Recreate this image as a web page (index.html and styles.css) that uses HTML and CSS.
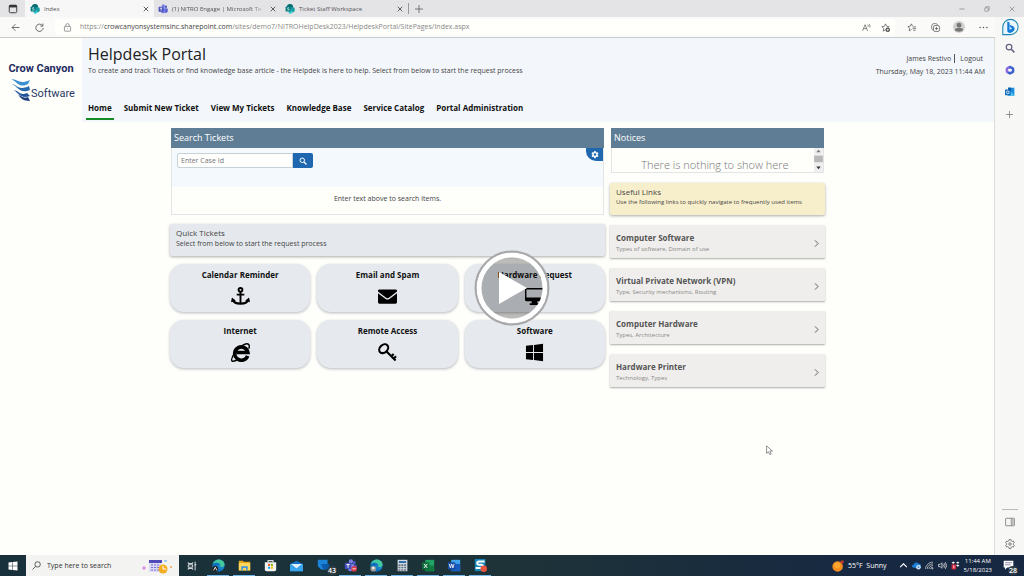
FILE: index.html
```html
<!DOCTYPE html>
<html lang="en">
<head>
<meta charset="utf-8">
<title>Helpdesk Portal</title>
<link rel="stylesheet" href="styles.css">
</head>
<body>
<svg class="defs" aria-hidden="true">
  <symbol id="sharepoint" viewBox="0 0 16 16"><circle cx="8" cy="5" r="5" fill="#036c70"/><circle cx="11.500" cy="9" r="4.200" fill="#1a9ba1"/><circle cx="8.500" cy="12.500" r="3.200" fill="#37c6d0"/><rect x="1" y="4" width="8" height="8" rx="1" fill="#03787c"/><path d="M6.700 6.200c-1-.7-2.800-.5-2.800.5 0 1.300 2.700.8 2.700 2.200 0 1.200-2 1.300-3 .6" fill="none" stroke="#fff" stroke-width="1.100"/></symbol>
  <symbol id="teams" viewBox="0 0 16 16"><circle cx="12.500" cy="4.500" r="2" fill="#5059c9"/><circle cx="8.500" cy="3" r="2.600" fill="#7b83eb"/><path d="M10 7h5.500v4a3 3 0 0 1-3 3H10z" fill="#5059c9"/><path d="M5 6h7v5.500a4 4 0 0 1-7 2z" fill="#7b83eb"/><rect x="1" y="4.500" width="8" height="8" rx="1" fill="#464eb8"/><path d="M3 6.700h4M5 6.700v4" stroke="#fff" stroke-width="1.200"/></symbol>
  <symbol id="close" viewBox="0 0 16 16"><path d="M2 2l12 12M14 2L2 14" stroke="currentColor" stroke-width="2" fill="none"/></symbol>
  <symbol id="plus" viewBox="0 0 16 16"><path d="M8 0v16M0 8h16" stroke="currentColor" stroke-width="1.500" fill="none"/></symbol>
  <symbol id="search" viewBox="0 0 16 16"><circle cx="6.500" cy="6.500" r="4.500" fill="none" stroke="currentColor" stroke-width="2"/><path d="M10 10l5 5" stroke="currentColor" stroke-width="2.500"/></symbol>
  <symbol id="gear" viewBox="0 0 16 16"><path fill="currentColor" fill-rule="evenodd" d="M6.500 0h3l.4 2.200 1.500.9 2.100-.8 1.500 2.600-1.700 1.400v1.800l1.700 1.400-1.500 2.600-2.100-.8-1.500.9-.4 2.300h-3l-.4-2.300-1.500-.9-2.100.8L1 9.500l1.700-1.400V6.300L1 4.900l1.500-2.600 2.100.8 1.500-.9zM8 4.700a2.500 2.500 0 1 0 0 5 2.500 2.500 0 0 0 0-5z"/></symbol>
  <symbol id="chevron" viewBox="0 0 8 12"><path d="M1.500 1l5 5-5 5" fill="none" stroke="currentColor" stroke-width="1.500"/></symbol>
  <symbol id="edge" viewBox="0 0 16 16"><circle cx="8" cy="8" r="7.500" fill="#1683c4"/><path d="M1 7C2 2 6 .3 9 .5c4 .3 6.800 3.500 6.500 6.500-.3 2.500-3 3.500-5.500 2.500 1-1.500 0-4.500-3-4.500S2 5.500 1 7z" fill="#43c9a0"/><path d="M1 7c2-3 7-3 8 0-3-1-4 3-1 5 2 1.500 4.500 1 6 .5C10 17 2 16 1 10z" fill="#0d6cbd"/></symbol>
</svg>

<header class="tabbar">
  <button class="tab-menu" aria-label="Tab actions"><svg viewBox="0 0 16 16"><rect x="2" y="2" width="12" height="12" rx="2" fill="none" stroke="#333" stroke-width="1.500"/><path d="M2 3.500h12" stroke="#333" stroke-width="4"/></svg></button>
  <div class="tab tab-active"><svg class="tab-icon"><use href="#sharepoint"/></svg><span class="tab-title">Index</span><button class="tab-close" aria-label="Close Index"><svg><use href="#close"/></svg></button></div>
  <div class="tab"><svg class="tab-icon"><use href="#teams"/></svg><span class="tab-title tab-fade">(1) NITRO Engage | Microsoft Te</span><button class="tab-close" aria-label="Close Teams"><svg><use href="#close"/></svg></button></div>
  <div class="tab"><svg class="tab-icon"><use href="#sharepoint"/></svg><span class="tab-title">Ticket Staff Workspace</span><button class="tab-close" aria-label="Close Workspace"><svg><use href="#close"/></svg></button></div>
  <button class="new-tab" aria-label="New tab"><svg><use href="#plus"/></svg></button>
  <div class="window-buttons">
    <button aria-label="Minimize"><svg viewBox="0 0 16 16"><path d="M1 8h14" stroke="currentColor" stroke-width="2"/></svg></button>
    <button aria-label="Restore"><svg viewBox="0 0 16 16" fill="none" stroke="currentColor" stroke-width="1.800"><rect x="2" y="5" width="9" height="9" rx="1"/><path d="M5 5V2h9v9h-3"/></svg></button>
    <button aria-label="Close window"><svg><use href="#close"/></svg></button>
  </div>
</header>

<div class="browser">
  <div class="view">
    <div class="toolbar">
      <button class="tool" aria-label="Back"><svg viewBox="0 0 16 16"><path d="M15 8H2M8 2L2 8l6 6" fill="none" stroke="currentColor" stroke-width="1.500"/></svg></button>
      <button class="tool" aria-label="Refresh"><svg viewBox="0 0 16 16"><path d="M13.500 5A6.500 6.500 0 1 0 14.500 8.500M14 1v4.500H9.500" fill="none" stroke="currentColor" stroke-width="1.500"/></svg></button>
      <div class="address">
        <svg class="lock" viewBox="0 0 16 16" fill="none" stroke="#888" stroke-width="1.500"><rect x="2.500" y="6" width="11" height="8.500" rx="1"/><path d="M5 6V4a3 3 0 0 1 6 0v2M8 9.500v1.500"/></svg>
        <a class="url" href="#">https://<b>crowcanyonsystemsinc.sharepoint.com</b>/sites/demo7/NITROHelpDesk2023/HelpdeskPortal/SitePages/Index.aspx</a>
        <button class="tool" aria-label="Read aloud"><svg viewBox="0 0 16 16" fill="none" stroke="currentColor" stroke-width="1.200"><path d="M1 14L5.500 3 10 14M2.600 10h5.800M10 3q1.500 1.500 1 4M12.500 1.500q2.500 2.500 1.500 6.500"/></svg></button>
        <button class="tool" aria-label="Add favorite"><svg viewBox="0 0 16 16" fill="none" stroke="currentColor" stroke-width="1.300"><path d="M8 12l-4 2.500.8-4.800L1.500 6.500 6 5.800 8 1.500l2 4.300 4.500.7-1 1"/><circle cx="12" cy="12" r="3.500" fill="#444"/><path d="M12 10v4M10 12h4" stroke="#fff"/></svg></button>
      </div>
      <button class="tool" aria-label="Favorites"><svg viewBox="0 0 16 16" fill="none" stroke="currentColor" stroke-width="1.300"><path d="M8 11.500l-4 2.500.8-4.500L1.500 6.500 6 5.500l1.800-4 2 4M10 7h6M10 10h6M11 13h4"/></svg></button>
      <button class="tool" aria-label="Collections"><svg viewBox="0 0 16 16" fill="none" stroke="currentColor" stroke-width="1.300"><path d="M4 12.500C1 12 .7 9 1.200 6 1.500 2.500 3 1 6 1c3.500 0 5 .5 5.700 2.500"/><rect x="4.500" y="4.500" width="10.500" height="10.500" rx="2.500"/><path d="M9.700 7v5.500M7 9.700h5.500"/></svg></button>
      <button class="tool avatar" aria-label="Profile"><svg viewBox="0 0 16 16"><circle cx="8" cy="8" r="8" fill="#d3d1ce"/><circle cx="8" cy="5.500" r="3.200" fill="#777"/><path d="M2.500 12c0-4 11-4 11 0-1.500 3-9.500 3-11 0z" fill="#777"/></svg></button>
      <button class="tool" aria-label="More"><svg viewBox="0 0 16 16" fill="currentColor"><circle cx="2" cy="8" r="1.300"/><circle cx="8" cy="8" r="1.300"/><circle cx="14" cy="8" r="1.300"/></svg></button>
    </div>

    <div class="page">
      <header class="site-header">
        <svg class="logo" viewBox="0 0 82 84" role="img" aria-label="Crow Canyon Software">
          <text class="logo-top" x="41" y="34" text-anchor="middle">Crow Canyon</text>
          <text class="logo-bottom" x="31" y="59">Software</text>
          <path d="M11 41c7 0 8 6 19 1l-2 4C19 51 17 43 11 41z" fill="#3c8fd0"/>
          <path d="M12 46c5 1 7 7 17 2l1 4c-10 4-12-3-18-6z" fill="#2869ad"/>
          <path d="M14 52c5 1 6 6 13 3l3 3c-9 3-11-2-16-6z" fill="#23569a"/>
          <path d="M18 57c4 1 5 4 10 2l2 4c-7 0-9-3-12-6z" fill="#1c3f7b"/>
        </svg>
        <div class="site-main">
          <h1 class="site-title">Helpdesk Portal</h1>
          <p class="site-desc">To create and track Tickets or find knowledge base article - the Helpdek is here to help. Select from below to start the request process</p>
          <nav class="site-nav">
            <a class="current" href="#">Home</a><a href="#">Submit New Ticket</a><a href="#">View My Tickets</a><a href="#">Knowledge Base</a><a href="#">Service Catalog</a><a href="#">Portal Administration</a>
          </nav>
        </div>
        <div class="user">
          <div class="user-line"><span class="user-name">James Restivo</span><a href="#">Logout</a></div>
          <div>Thursday, May 18, 2023 11:44 AM</div>
        </div>
      </header>

      <main class="content">
        <div class="col-left">
          <section class="panel">
            <h2 class="panel-title">Search Tickets</h2>
            <div class="search-area">
              <form class="search-form"><input type="text" placeholder="Enter Case Id" aria-label="Case Id"><button type="button" aria-label="Search"><svg><use href="#search"/></svg></button></form>
              <button class="settings" aria-label="Settings"><svg><use href="#gear"/></svg></button>
            </div>
            <p class="search-empty">Enter text above to search items.</p>
          </section>
          <section class="banner quick">
            <h2>Quick Tickets</h2>
            <p>Select from below to start the request process</p>
          </section>
          <div class="tiles">
            <a class="tile" href="#"><span>Calendar Reminder</span><svg viewBox="0 0 20 20"><g fill="none" stroke="#000" stroke-width="2"><circle cx="10" cy="3" r="2"/><path d="M10 5v13M6 8h8"/><path d="M2 13c1 6 15 6 16 0" stroke-width="2.500"/></g><path d="M0 16l1-5 4 3.500zM20 16l-1-5-4 3.500z"/></svg></a>
            <a class="tile" href="#"><span>Email and Spam</span><svg viewBox="0 0 20 20"><path d="M0 4q0-1.500 1.500-1.500h17Q20 2.500 20 4v.8l-8.500 6.500q-1.500 1-3 0L0 4.800z"/><path d="M0 6.500l8 6q2 1.500 4 0l8-6V16q0 1.500-1.500 1.500h-17Q0 17.500 0 16z"/></svg></a>
            <a class="tile" href="#"><span>Hardware Request</span><svg viewBox="0 0 20 20"><path fill-rule="evenodd" d="M1 1h18l1 1v12l-1 1h-6v2h2v2H5v-2h2v-2H1l-1-1V2zm.5 1.500V11h17V2.500z"/></svg></a>
            <a class="tile" href="#"><span>Internet</span><svg viewBox="0 0 20 20"><path d="M17.500 13.500A7 7 0 1 1 17.800 10H6" fill="none" stroke="#000" stroke-width="3.800"/><path d="M12 2.500C17-.5 20.500.5 18.800 6M3.500 11C-2 20 1 21 8 17" fill="none" stroke="#000" stroke-width="1.500"/></svg></a>
            <a class="tile" href="#"><span>Remote Access</span><svg viewBox="0 0 20 20"><g fill="none" stroke="#000" stroke-width="2.200"><ellipse cx="6" cy="6" rx="5.300" ry="4" transform="rotate(-45 6 6)"/><path d="M9 9l9.500 9.500M14 14l2.500-2.500M16.500 16.500l2.500-2.500"/></g></svg></a>
            <a class="tile" href="#"><span>Software</span><svg viewBox="0 0 20 20"><path d="M1 3l7.500-1v7.500H1zM9.500 2L19 .8v8.700H9.500zM1 10.500h7.500V18L1 17zM9.500 10.500H19v8.700L9.500 18z"/></svg></a>
          </div>
        </div>
        <div class="col-right">
          <section class="panel">
            <h2 class="panel-title">Notices</h2>
            <div class="notice-body">
              <p>There is nothing to show here</p>
              <svg class="scroller" viewBox="0 0 8 22" aria-hidden="true"><path fill="#eee" d="M0 0h8v22H0z"/><path fill="#b8b8b8" d="M0 7h8v6H0z"/><path fill="#777" d="M4 1.500L6 4H2z"/><path fill="#333" d="M4 19.500L6 17H2z"/></svg>
            </div>
          </section>
          <section class="banner useful">
            <h2>Useful Links</h2>
            <p>Use the following links to quickly navigate to frequently used items</p>
          </section>
          <a class="link-card" href="#"><span><strong>Computer Software</strong><small>Types of software, Domain of use</small></span><svg><use href="#chevron"/></svg></a>
          <a class="link-card" href="#"><span><strong>Virtual Private Network (VPN)</strong><small>Type, Security mechanisms, Routing</small></span><svg><use href="#chevron"/></svg></a>
          <a class="link-card" href="#"><span><strong>Computer Hardware</strong><small>Types, Architecture</small></span><svg><use href="#chevron"/></svg></a>
          <a class="link-card" href="#"><span><strong>Hardware Printer</strong><small>Technology, Types</small></span><svg><use href="#chevron"/></svg></a>
        </div>
      </main>
    </div>
  </div>

  <aside class="sidebar">
    <button class="bing" aria-label="Bing"><svg viewBox="0 0 20 20"><path d="M2 18.500V10a8.500 8.500 0 1 1 8.500 8.500z" fill="#e9f6fc" stroke="#2287b5" stroke-width="1.200"/><path d="M7 4l2.500 1v8l3-1.500-2-1L9.500 7.500l4.500 2q2.500 3-.5 5.500L9.500 17 7 15z" fill="#147bd6"/></svg></button>
    <button class="side-search" aria-label="Search"><svg><use href="#search"/></svg></button>
    <button aria-label="Microsoft 365"><svg viewBox="0 0 16 16" fill="none" stroke-width="4"><path d="M9 2.500L4 5Q3 5.500 3 7v3q0 1 1 1.500l3 1.500" stroke="#8b6be0"/><path d="M7 3l5 2q1 .5 1 2v3q0 1-1 1.500L8 13.500 5 12" stroke="#3c62cf"/></svg></button>
    <button aria-label="Outlook"><svg viewBox="0 0 16 16"><path d="M5 1h10v13H4z" fill="#1c90dc"/><path d="M5 1h5v5H5z" fill="#0a5aa8"/><path d="M10 8l5 6H5z" fill="#54c0f2"/><rect x="0" y="4" width="9" height="9" rx="1" fill="#0f6cbd"/><circle cx="4.500" cy="8.500" r="2.200" fill="none" stroke="#fff" stroke-width="1.300"/></svg></button>
    <button class="side-add" aria-label="Add"><svg><use href="#plus"/></svg></button>
    <div class="side-bottom">
      <button aria-label="Hide sidebar"><svg viewBox="0 0 16 16" fill="none" stroke="#777" stroke-width="1.300"><rect x="1" y="2" width="14" height="12" rx="1"/><path d="M10 2v12" /><path d="M12.500 3v10" stroke="#bbb" stroke-width="3"/></svg></button>
      <button aria-label="Sidebar settings"><svg viewBox="0 0 16 16" fill="none" stroke="#555" stroke-width="1.200"><path d="M6.500 1h3l.5 2 1.500.9 2-.6 1.500 2.600L13.500 7.200v1.700l1.500 1.300-1.500 2.600-2-.6-1.500.9-.5 2h-3l-.5-2-1.500-.9-2 .6L1 10.200l1.500-1.300V7.200L1 5.900l1.500-2.600 2 .6L6 3z"/><circle cx="8" cy="8" r="2"/></svg></button>
    </div>
  </aside>
</div>

<footer class="taskbar">
  <button class="start" aria-label="Start"><svg viewBox="0 0 20 20" fill="#fff"><path d="M1 3l7.500-1v7.500H1zM9.500 2L19 .8v8.700H9.500zM1 10.500h7.500V18L1 17zM9.500 10.500H19v8.700L9.500 18z"/></svg></button>
  <div class="task-search">
    <svg class="task-lens" viewBox="0 0 16 16" fill="none" stroke="#444" stroke-width="1.500"><circle cx="10" cy="6" r="4.800"/><path d="M6.500 9.500L1 15"/></svg>
    <input type="text" placeholder="Type here to search" aria-label="Type here to search">
    <svg class="task-art" viewBox="0 0 30 16"><rect x="7" y="2" width="12" height="12" rx="1" fill="#dcd9f7"/><path d="M7 2h13v3H7z" fill="#5049b8"/><path d="M9 7h8M9 9.500h8M9 12h8" stroke="#7771ca" stroke-dasharray="2 1"/><circle cx="21" cy="11" r="4.500" fill="#f3ae24"/><path d="M21 8v3h3" fill="none" stroke="#fff"/><path d="M2 8v4M0 10h4" stroke="#d672e2"/><path d="M22 3h3" stroke="#56a8e8"/><circle cx="29" cy="9" r="1" fill="#f1a25a"/></svg>
  </div>
  <div class="apps">
    <button aria-label="Task view"><svg class="task-view" viewBox="0 0 16 16" fill="none" stroke="#fff" stroke-width="1.300"><path d="M2 2v2h7V2M2 14v-2h7v2M2 6h7v4H2zM13 1v14M12 6h3"/></svg></button>
    <button class="running" aria-label="Edge"><svg viewBox="0 0 16 16"><use href="#edge"/><circle cx="4" cy="12" r="3.500" fill="#222"/><path d="M2 14l2-4 2 4" stroke="#fff" fill="none"/></svg></button>
    <button class="running" aria-label="File Explorer"><svg viewBox="0 0 16 16"><path d="M1 2h5l1 1.500h8V14H1z" fill="#e8a91b"/><path d="M1 5h14v9H1z" fill="#ffd75e"/><path d="M4 14v-5h8v5h-2v-3H6v3z" fill="#3f97d9"/></svg></button>
    <button aria-label="Store"><svg viewBox="0 0 16 16"><path d="M5 4V2h6v2" fill="none" stroke="#ddd" stroke-width="1.500"/><path d="M1 4h14v9q0 2-2 2H3q-2 0-2-2z" fill="#f3f3f3"/><path d="M5 6h2.500v2.500H5z" fill="#f25022"/><path d="M8.500 6H11v2.500H8.500z" fill="#7fba00"/><path d="M5 9.500h2.500V12H5z" fill="#00a4ef"/><path d="M8.500 9.500H11V12H8.500z" fill="#ffb900"/></svg></button>
    <button aria-label="Mail"><svg viewBox="0 0 16 16"><path d="M0 6l8-4 8 4v9H0z" fill="#1370c4"/><path d="M1 6h14l-7 6z" fill="#d9efff"/><path d="M0 6l8 6 8-6v9H0z" fill="#37a6ee"/></svg></button>
    <button class="wide" aria-label="Your Phone"><svg viewBox="0 0 16 16"><path d="M1 1h12v9l-3 3H5l-4-4z" fill="#1b83d8"/><path d="M5 6h10v7H8z" fill="#0b5cad"/></svg><span class="badge">43</span></button>
    <button class="running" aria-label="Teams"><svg viewBox="0 0 16 16"><use href="#teams"/><circle cx="12.500" cy="12" r="3.500" fill="#d93a45"/><path d="M10.500 12h4" stroke="#fff"/></svg></button>
    <button class="running" aria-label="Edge profile"><svg viewBox="0 0 16 16"><use href="#edge"/><circle cx="4" cy="12" r="3.500" fill="#999"/><circle cx="4" cy="11" r="1.500" fill="#eee"/></svg></button>
    <button class="running" aria-label="Calculator"><svg viewBox="0 0 16 16"><rect x="2" y="1" width="12" height="14" fill="#d8dde2"/><path d="M3.500 2.500h9V5h-9z" fill="#2e6fa9"/><path d="M3 7.500h10M3 10.500h10M3 13.500h10" stroke="#607485" stroke-width="2" stroke-dasharray="2.500 1"/></svg></button>
    <button class="running" aria-label="Excel"><svg viewBox="0 0 16 16"><path d="M4 1h11v14H4z" fill="#21a366"/><path d="M4 8h11v7H4z" fill="#107c41"/><path d="M0 4h9v9H0z" fill="#0f6b38"/><path d="M2.500 6l4 5M6.500 6l-4 5" stroke="#fff" stroke-width="1.200"/></svg></button>
    <button class="running" aria-label="Word"><svg viewBox="0 0 16 16"><path d="M4 1h11v14H4z" fill="#41a5ee"/><path d="M4 6h11v9H4z" fill="#185abd"/><path d="M0 4h9v9H0z" fill="#144ca4"/><path d="M1.500 6l1.500 5 1.500-5L6 11l1.500-5" fill="none" stroke="#fff"/></svg></button>
    <button class="running" aria-label="Snagit"><svg viewBox="0 0 16 16"><path d="M1 0h13v15H1z" fill="#1686b8"/><path d="M13 3H6Q4 3 4 5t2 2h3q2 0 2 2t-2 2H2" fill="none" stroke="#fff" stroke-width="2.500"/><circle cx="12" cy="12" r="4" fill="#e6533f"/></svg></button>
  </div>
  <div class="tray">
    <svg class="sun" viewBox="0 0 16 16"><circle cx="7.500" cy="8.500" r="7" fill="#f58c1f"/><circle cx="7" cy="7" r="4" fill="#fba72d"/><circle cx="13.500" cy="2.500" r="2.200" fill="#c8372b"/></svg>
    <span class="weather">55°F&nbsp; Sunny</span>
    <svg viewBox="0 0 16 16"><path d="M2 11l6-6 6 6" fill="none" stroke="#fff" stroke-width="2"/></svg>
    <svg viewBox="0 0 16 16"><path d="M3 12a3 3 0 0 1 0-6 5 5 0 0 1 9-1 3.500 3.500 0 0 1 1 7z" fill="#1d7fd6"/><circle cx="11.500" cy="11" r="4" fill="#d9e9f7"/><path d="M9.500 11h4M11.500 9v4" stroke="#1864ab"/></svg>
    <svg viewBox="0 0 16 16" fill="none" stroke="#ddd" stroke-width="1.300"><path d="M1 14C1 8 7 2 14 2M4 14C4 9 9 5 14 5M7 14c0-3 4-6 7-6M10 14c0-2 2-3 4-3"/><circle cx="13" cy="13.500" r="1"/></svg>
    <svg viewBox="0 0 16 16" fill="none" stroke="#eee" stroke-width="1.300"><path d="M1 6h3l3-3v10L4 10H1zM9 6q1.500 2 0 4M11 4q3 4 0 8M13 2q5 6 0 12"/></svg>
    <svg viewBox="0 0 16 16"><path d="M4 1l3 2-3 2-3-2zM12 1l3 2-3 2-3-2zM12 6l3 2-3 2-3-2z" fill="#fff"/><rect x="1" y="6" width="8" height="9" fill="#d8273b"/><path d="M5 8v5" stroke="#fff" stroke-width="1.500"/></svg>
    <time class="clock">11:44 AM<br>5/18/2023</time>
    <button class="notify" aria-label="Notifications"><svg viewBox="0 0 16 16"><path d="M1 1h14v10H6l-3 3v-3H1z" fill="#fff"/><path d="M3 4h10M3 7h8" stroke="#557"/></svg><span class="badge">28</span></button>
  </div>
</footer>

<button class="play" aria-label="Play video"><svg viewBox="0 0 76 76"><circle cx="38" cy="38" r="36" fill="#000" fill-opacity=".26"/><circle cx="38" cy="38" r="33" fill="none" stroke="#fff" stroke-width="5"/><circle cx="38" cy="38" r="36.500" fill="none" stroke="#a8a9aa" stroke-width="2"/><path d="M25 22v32l28-16z" fill="#fff"/></svg></button>
<svg class="cursor" viewBox="0 0 12 18" aria-hidden="true"><path d="M1 1v13l3-3 2.500 5 2.500-1-2.500-5H11z" fill="#fff" stroke="#666" stroke-width="1.200"/></svg>
</body>
</html>
```
FILE: styles.css
```css
* { box-sizing: border-box; }
body {
  margin: 0;
  min-height: 100vh;
  display: flex;
  flex-direction: column;
  position: relative;
  background: #fefefb;
  color: #222;
  font-family: "Open Sans", "Noto Sans", sans-serif;
  font-size: 7px;
  line-height: 10px;
}
h1, h2, p { margin: 0; font-weight: 400; }
a { color: inherit; text-decoration: none; }
button { border: 0; padding: 0; background: none; color: inherit; font: inherit; display: flex; align-items: center; justify-content: center; }
input { border: 0; padding: 0; background: none; font: inherit; min-width: 0; }
svg { display: block; flex: none; }
.defs { position: absolute; width: 0; height: 0; }

.tabbar { display: flex; height: 17px; background: #e4e3e6; color: #555; }
.tab-menu { width: 25px; }
.tab-menu svg { width: 10px; height: 10px; }
.tab { width: 127px; display: flex; align-items: center; gap: 4px; padding: 0 4px; font-size: 6px; }
.tab-active { background: #f7f7f7; width: 129px; padding-left: 5px; }
.tab-icon { width: 10px; height: 10px; }
.tab-title { flex: 1; min-width: 0; white-space: nowrap; }
.tab-fade { mask-image: linear-gradient(90deg, #000 85%, transparent); }
.tab-close svg { width: 6px; height: 6px; }
.tab-close { color: #333; width: 8px; }
.new-tab { width: 20px; border-left: 1px solid #999; margin: 3px 0; }
.new-tab svg { width: 8px; height: 8px; }
.window-buttons { margin-left: auto; display: flex; color: #888; }
.window-buttons button { width: 25px; }
.window-buttons svg { width: 6px; height: 6px; }

.browser { flex: 1; display: flex; }
.view { flex: 1; min-width: 0; display: flex; flex-direction: column; }
.toolbar { display: flex; align-items: center; height: 21px; border-bottom: 1px solid #ccc; background: #fafaf8; color: #555; padding-left: 3px; }
.tool { width: 24px; height: 20px; }
.tool svg { width: 9px; height: 9px; }
.tool.avatar svg { width: 12px; height: 12px; }
.address { flex: 1; display: flex; align-items: center; height: 16px; margin: 0 4px; border-radius: 4px; background: #fffffc; }
.address .tool { width: 19px; }
.lock { width: 9px; height: 9px; margin: 0 8px; }
.url { flex: 1; color: #888; font-size: 7px; }
.url b { font-weight: 400; color: #444; }

.page { flex: 1; border-right: 1px solid #ddd; }
.site-header { display: flex; min-height: 84px; background: #f3f7fc; }
.logo { width: 82px; height: 84px; margin: 0 2px 0 0; background: #fefefb; }
.logo-top { font: 700 11px Roboto, sans-serif; fill: #1e2d5f; }
.logo-bottom { font: 400 11px Roboto, sans-serif; fill: #2b3a68; }
.site-main { flex: 1; padding: 5px 0 0 4px; }
.site-title { font-size: 16px; line-height: 22px; }
.site-desc { color: #444; line-height: 12px; }
.site-nav { display: flex; gap: 8px; margin: 25px 0 0 -2px; font-weight: 700; color: #111; font-size: 8px; }
.site-nav a { padding: 0 2px 4px; line-height: 12px; border-bottom: 2px solid transparent; }
.site-nav a.current { border-color: #168a25; }
.user { padding: 14px 9px 0 0; text-align: right; color: #444; line-height: 13px; font-size: 7px; }
.user-line { display: flex; justify-content: flex-end; padding-right: 2px; }
.user-name { border-right: 1px solid #555; padding-right: 3px; margin: 2px 5px 2px 0; line-height: 9px; }

.content { max-width: 656px; margin: 0 auto; padding: 6px 0 0 1px; display: grid; grid-template-columns: minmax(0, 435fr) minmax(0, 215fr); gap: 5px; }
.panel { margin: 0 1px; border: 1px solid #e2e5e8; border-top: 0; }
.panel-title { margin: 0 -1px; padding: 0 3px; background: #5f7e96; color: #fff; font-size: 9px; line-height: 20px; }
.search-area { display: flex; justify-content: space-between; align-items: flex-start; min-height: 39px; background: #f3f9fd; }
.search-form { display: flex; height: 15px; margin: 5px; border-radius: 2px; }
.search-form input { width: 116px; padding: 0 3px; border: 1px solid #c8d0d8; border-radius: 2px 0 0 2px; background: #fefefd; }
.search-form input::placeholder { color: #777; opacity: 1; }
.search-form button { width: 20px; border-radius: 0 2px 2px 0; background: #1f67ae; color: #fff; }
.search-form svg { width: 8px; height: 8px; }
.settings { width: 17px; height: 13px; border-radius: 0 0 0 10px; background: #1f67ae; color: #fff; }
.settings svg { width: 8px; height: 8px; }
.search-empty { padding: 7px 0 10px; text-align: center; color: #444; }
.banner { padding: 3px 6px; min-height: 32px; color: #444; border-radius: 2px; box-shadow: 0 1px 3px #aaa; }
.banner h2 { font-size: 8px; line-height: 11px; }
.quick { margin-top: 9px; background: #e5e9ed; }
.quick p { line-height: 12px; }
.useful { margin-top: 10px; background: #f7efcb; }
.useful p { font-size: 6px; }
.tiles { display: grid; grid-template-columns: repeat(3, 1fr); gap: 8px 7px; margin-top: 8px; }
.tile { display: flex; flex-direction: column; align-items: center; gap: 7px; height: 48px; padding-top: 6px; border-radius: 14px; background: #e6eaef; box-shadow: 0 1px 3px #b5b8bb; font-weight: 700; font-size: 8px; color: #111; }
.tile svg { width: 19px; height: 19px; }
.notice-body { display: flex; height: 24px; overflow: hidden; }
.notice-body p { flex: 1; padding: 9px 0 0 4px; text-align: center; font-size: 11px; line-height: 15px; color: #777; font-weight: 300; }
.scroller { width: 9px; height: 24px; }
.link-card { display: flex; align-items: center; justify-content: space-between; min-height: 33px; margin-top: 10px; padding: 3px 6px 0; background: #f0eeec; border-radius: 1px; box-shadow: 0 1px 2px #aaa; color: #555; }
.link-card strong { display: block; font-size: 8px; line-height: 12px; }
.link-card small { display: block; font-size: 6px; color: #888; }
.link-card svg { width: 5px; height: 9px; }

.sidebar { width: 29px; display: flex; flex-direction: column; align-items: center; background: #f7f7f5; color: #666; }
.sidebar button { height: 22px; }
.sidebar svg { width: 10px; height: 10px; }
.sidebar .bing { height: 20px; }
.sidebar .bing svg { width: 18px; height: 18px; }
.side-add svg { width: 7px; height: 7px; }
.side-search { color: #656184; }
.side-bottom { margin-top: auto; border-top: 1px solid #bbb; padding: 1px 3px 0; }

.taskbar { display: flex; height: 21px; background: linear-gradient(90deg, #18303b, #1d3338 50%, #172842 85%); color: #fff; }
.start { width: 26px; }
.start svg { width: 10px; height: 10px; }
.task-search { width: 153px; display: flex; align-items: center; padding: 0 6px; gap: 6px; background: #f3f3f2; }
.task-lens { width: 9px; height: 9px; }
.task-search input { flex: 1; font-size: 7px; }
.task-search input::placeholder { color: #333; opacity: 1; }
.task-art { width: 32px; height: 16px; }
.apps { display: flex; }
.apps button { width: 26px; margin-right: 0; }
.apps svg { width: 13px; height: 13px; }
.apps .task-view { width: 10px; height: 10px; }
.apps .running { background: linear-gradient(#76b9ed, #76b9ed) center bottom / 22px 1px no-repeat; }
.apps button.wide { width: 28px; }
.wide, .notify { position: relative; }
.badge { position: absolute; right: 0; bottom: 1px; padding: 0 1px; border-radius: 5px; background: #333d45; color: #fff; font-size: 7px; line-height: 9px; font-weight: 600; }
.tray { margin-left: auto; display: flex; align-items: center; gap: 4px; }
.tray svg { width: 9px; height: 9px; }
.tray .sun { width: 12px; height: 12px; }
.weather { margin-right: 8px; font-size: 7px; }
.clock { text-align: center; font-size: 6px; line-height: 9px; margin: 0 2px 0 0; }
.tray .notify { width: 20px; height: 21px; margin-right: 6px; }
.notify svg { width: 11px; height: 11px; }

.play { position: absolute; inset: 0; margin: auto; width: 76px; height: 76px; }
.play svg { width: 76px; height: 76px; }
.cursor { position: absolute; left: 766px; top: 445px; width: 7px; height: 11px; }
```
